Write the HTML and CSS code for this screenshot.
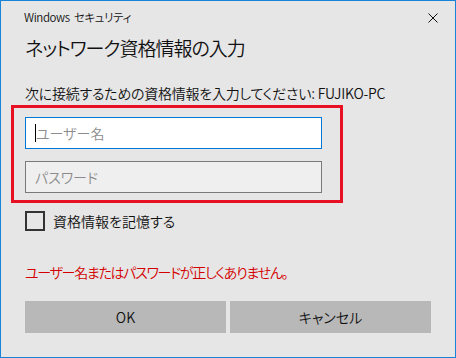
FILE: index.html
```html
<!DOCTYPE html>
<html lang="ja">

<head>
    <meta charset="UTF-8">
    <meta name="viewport" content="width=device-width, initial-scale=1.0">
    <title>Windows セキュリティ</title>
    <link rel="stylesheet" href="styles.css">
</head>

<body>

    <div class="dialog">
        <div class="titlebar">
            <span class="title">Windows セキュリティ</span>
            <svg class="close" width="10" height="10" viewBox="0 0 10 10">
                <path d="M0.5 0.5 L9.5 9.5 M9.5 0.5 L0.5 9.5" stroke="#111" stroke-width="1" fill="none" />
            </svg>
        </div>

        <div class="content">
            <h1>ネットワーク資格情報の入力</h1>
            <p class="lead">次に接続するための資格情報を入力してください: FUJIKO-PC</p>

            <!-- 赤枠で囲んだ入力欄 -->
            <div class="highlight">
                <div class="field focused">
                    <span class="caret"></span>
                    <span class="placeholder">ユーザー名</span>
                </div>
                <div class="field">
                    <span class="placeholder">パスワード</span>
                </div>
            </div>

            <label class="remember">
                <span class="checkbox"></span>
                資格情報を記憶する
            </label>

            <p class="error">ユーザー名またはパスワードが正しくありません。</p>

            <div class="buttons">
                <button type="button">OK</button>
                <button type="button">キャンセル</button>
            </div>
        </div>
    </div>

</body>

</html>
```

FILE: styles.css
```css
* {
    box-sizing: border-box;
}

body {
    margin: 0;
    font-family: "Noto Sans CJK JP", "Noto Sans", sans-serif;
    font-feature-settings: "palt";
    font-weight: 350;
    color: #000;
}

button {
    font-family: inherit;
    font-feature-settings: inherit;
    font-weight: inherit;
}

.dialog {
    width: 456px;
    height: 358px;
    border: 1px solid #1883d7;
    background-color: #e6e6e6;
}

.titlebar {
    display: flex;
    justify-content: space-between;
    align-items: flex-start;
    padding: 7px 17px 0 23px;
    height: 33px;
}

.title {
    font-size: 11.5px;
    line-height: 18px;
    letter-spacing: -0.4px;
    word-spacing: 2px;
    color: #111;
}

.close {
    margin-top: 5px;
}

.content {
    padding: 0 24px;
}

h1 {
    margin: 0;
    font-size: 19px;
    font-weight: 350;
    line-height: 28px;
    letter-spacing: -1px;
    color: #111;
}

.lead {
    margin: 21px 0 0;
    font-size: 14px;
    line-height: 20px;
    letter-spacing: -0.25px;
    color: #111;
}

.highlight {
    margin: 2px 0 0 -14px;
    width: 332px;
    border: 3px solid #e81123;
    padding: 9px 18px 7px 11px;
}

.field {
    display: flex;
    align-items: center;
    height: 32px;
    border: 1px solid #7a7a7a;
    background-color: #efefef;
    padding-left: 9px;
    font-size: 14px;
}

.field + .field {
    margin-top: 12px;
}

.field.focused {
    border-color: #0078d7;
    background-color: #fff;
}

.caret {
    width: 1px;
    height: 18px;
    background-color: #000;
}

.placeholder {
    color: #8c8c8c;
}

.remember {
    display: flex;
    align-items: center;
    gap: 8px;
    margin-top: 8px;
    font-size: 14px;
    line-height: 20px;
    color: #111;
}

.checkbox {
    width: 20px;
    height: 20px;
    border: 2px solid #333;
}

.error {
    margin: 31px 0 0;
    font-size: 14px;
    line-height: 20px;
    letter-spacing: -1.3px;
    color: #d40000;
}

.buttons {
    display: flex;
    gap: 4px;
    margin-top: 19px;
}

.buttons button {
    flex: 1;
    height: 32px;
    border: none;
    background-color: #b8b8b8;
    font-size: 14px;
    color: #111;
}
```
